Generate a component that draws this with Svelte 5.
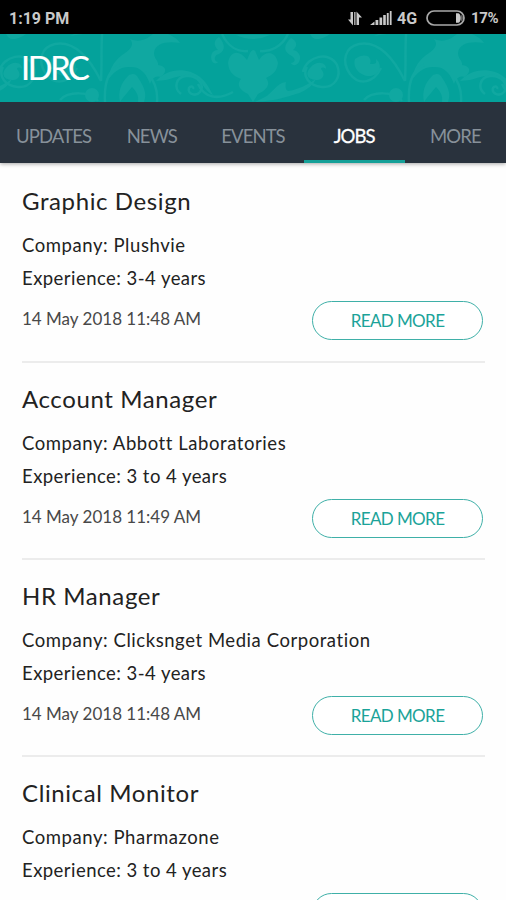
<script>
	let tabs = ['UPDATES', 'NEWS', 'EVENTS', 'JOBS', 'MORE'];
	let active = 'JOBS';

	let jobs = [
		{ title: 'Graphic Design', company: 'Plushvie', experience: '3-4 years', date: '14 May 2018 11:48 AM' },
		{ title: 'Account Manager', company: 'Abbott Laboratories', experience: '3 to 4 years', date: '14 May 2018 11:49 AM' },
		{ title: 'HR Manager', company: 'Clicksnget Media Corporation', experience: '3-4 years', date: '14 May 2018 11:48 AM' },
		{ title: 'Clinical Monitor', company: 'Pharmazone', experience: '3 to 4 years' }
	];
</script>

<svelte:head>
	<title>IDRC</title>
</svelte:head>

<div class="screen">
	<div class="status">
		<span class="clock">1:19 PM</span>
		<svg class="data" width="14" height="15" viewBox="0 0 14 15">
			<path d="M0 8.500h2.500V1h2.500v13.500zM6.200 1h1.300v13H6.200zM8.500 14V.5L14 6.500h-3V14z" />
		</svg>
		<svg class="signal" width="22" height="14" viewBox="0 0 22 14">
			<path d="M0 14l4.500-3.500V14zM5.500 9h2.800v5H5.500zM9.500 6.500h2.700V14H9.500zM13.200 4h2.600v10h-2.600zM16.800 2h1.900v12h-1.900zM19.800 0h1.800v14h-1.800z" />
		</svg>
		<span class="net">4G</span>
		<svg class="battery" width="39" height="16" viewBox="0 0 39 16">
			<rect x="1" y="1" width="37" height="14" rx="7" fill="none" stroke="#a9a9a9" stroke-width="1.700" />
			<path d="M30 3.200h2.500c3 1 3 8.600 0 9.600H30z" />
			<path d="M35.500 4.500q2 3.500 0 7z" />
		</svg>
		<span class="percent">17%</span>
	</div>

	<div class="header">
		<svg class="damask" width="506" height="68" viewBox="0 0 506 68">
			<defs>
				<g id="scroll">
					<path d="M108 46c2-14 8-21 17-27 7-5 9-9 5-14 10 4 17 0 23-5h15c4 2 9 4 12 9-13-2-25 0-26 10 0 6 5 8 4 12 8 1 10 6 3 12-6-2-9 2-11 7-4-12-11-18-21-17-10 0-16 6-21 13z" />
					<path d="M120 68c-2-10 0-18 9-27 5-2 6-1 8 1 5 8 11 16 7 26h-6c1-7-2-11-6-15-4 5-8 9-12 15z" />
					<path d="M105 68c-1-18 3-32 15-37M157 68c1-12-3-24-12-30" class="line" />
					<path d="M156 47c9-10 22-13 35-9 14 5 18 16 22 23-7-3-9-10-15-15-11-8-22-3-32 0z" />
					<path d="M181 60c-8-6-5-17 5-18 12-1 19 9 14 16-4 5-13 2-11-4 2-3 5-1 4 1" class="line" />
					<path d="M198 50c6 13 19 17 35 8" class="line" />
					<path d="M219 3c-5 3-6 8-1 13-7 0-8 7-6 11 1 3 5 3 6 1-5-1-4-7 1-8 7-4 6-10 0-17z" />
					<path d="M291 4c6 3 7 8 2 12 6 1 9 7 6 12-2 4-7 4-8 1 6-1 4-6-1-8-7-4-6-11 1-17z" />
					<path d="M222 0c6 13 16 18 26 17M288 0c-6 13-18 18-28 17" class="line" />
					<path d="M236 1q17 8 34 0zM228 29c2-12 11-14 19-3l3-7c2-4 5-4 6 0l3 7c7-11 17-8 19 3-1 9-6 12-12 15 5 6 1 12-8 16l-5 8-5-8c-8-4-12-9-7-15-8-3-12-7-13-16z" />
					<path d="M265 63c8-4 11-14 21-15-1 6 0 8 2 9 9-1 19-6 28-12-7 13-20 15-30 18-10 3-19 4-31 5z" />
					<path d="M303 38c4-17 27-21 34-7 5 12-3 23-15 22-13-1-20-11-15-20" class="line" />
					<path d="M310 34c7-9 17-5 16 1-2-2-5-2-5 0 5 5 2 11-4 11-8 0-13-5-7-12z" />
					<path d="M381 34c-7 14-21 19-31 6-9-13-5-27 9-30 16-3 31 7 46 37" class="line" />
					<path d="M355 25c9-7 18-3 15 5 8 0 6-2 6-5 7 6 4 15-5 17-10 1-19-8-16-17z" />
					<path d="M406 0c-1 20 0 30-1 47M364 66c8-9 31-9 38 1" class="line" />
					<circle cx="396" cy="61" r="7" />
					<path d="M374 2l4-2h9zM312 3c5 5 14 0 18-3h-20z" />
				</g>
			</defs>
			<use href="#scroll" />
			<use href="#scroll" x="304" />
			<use href="#scroll" x="-304" />
		</svg>
		<h1>IDRC</h1>
	</div>

	<div class="tabs">
		{#each tabs as tab}
			<div class="tab" class:active={tab === active}><span>{tab}</span></div>
		{/each}
	</div>

	<div class="list">
		{#each jobs as job}
			<div class="job">
				<h2>{job.title}</h2>
				<p class="company">Company: {job.company}</p>
				<p>Experience: {job.experience}</p>
				<div class="row">
					<span class="date">{job.date ?? ''}</span>
					<button class="btn" aria-label="Read more">{job.date ? 'READ MORE' : ''}</button>
				</div>
			</div>
		{/each}
	</div>
</div>

<style>
	:global(body) {
		background: #fefefe;
	}

	.screen {
		width: 506px;
		height: 900px;
		overflow: hidden;
		display: flex;
		flex-direction: column;
		font-family: Lato, "Open Sans", sans-serif;
		color: #222;
	}

	.status {
		flex: none;
		height: 34px;
		box-sizing: border-box;
		padding: 2px 8px 0 9px;
		display: flex;
		align-items: center;
		background: #000;
		color: #c9c9c9;
		fill: #c9c9c9;
		font: 700 16px Roboto, sans-serif;
	}

	.clock {
		flex: 1;
	}

	.signal {
		margin-left: 8px;
	}

	.net {
		margin-left: 5px;
		width: 21px;
	}

	.battery {
		margin: 0 6px 0 8px;
	}

	.percent {
		width: 27px;
		font-size: 15px;
		letter-spacing: -0.4px;
	}

	.header {
		flex: none;
		height: 68px;
		position: relative;
		background: #04a29b;
	}

	/* pattern lies under the title */
	.damask {
		position: absolute;
		left: 0;
		top: 0;
		fill: #10a8a1;
	}

	.damask .line {
		fill: none;
		stroke: #10a8a1;
		stroke-width: 2.5;
	}

	h1 {
		position: relative;
		margin: 0;
		padding-left: 21px;
		line-height: 68px;
		font-size: 32.500px;
		font-weight: 400;
		letter-spacing: -2.3px;
		color: #fff;
		-webkit-text-stroke: 0.2px #fff;
	}

	.tabs {
		flex: none;
		height: 61px;
		display: flex;
		background: #29323d;
		box-shadow: 0 1px 4px rgba(0, 0, 0, 0.35);
	}

	.tab {
		flex: 1 1 0;
		width: 0;
		display: flex;
		justify-content: center;
		line-height: 69px;
		font-size: 18.500px;
		letter-spacing: -0.9px;
		white-space: nowrap;
		color: #87919a;
	}

	.tab:first-child span {
		padding-left: 6px;
	}

	.tab.active {
		color: #fff;
		-webkit-text-stroke: 0.3px #fff;
		box-shadow: inset 0 -3px #15a098;
	}

	.list {
		padding-top: 2px;
	}

	.job {
		height: 197px;
		margin: 0 21px 0 22px;
		box-sizing: border-box;
		border-bottom: 2px solid #ececec;
		padding-top: 20px;
	}

	.job:first-child {
		height: 198px;
	}

	h2 {
		margin: 0 0 12px;
		line-height: 32px;
		font-size: 24px;
		font-weight: 400;
		letter-spacing: 0.6px;
	}

	p {
		margin: 0;
		line-height: 33px;
		font-size: 18.500px;
		letter-spacing: 0.45px;
		white-space: nowrap;
	}

	.company {
		letter-spacing: 0.56px;
	}

	.row {
		display: flex;
		justify-content: space-between;
		margin-top: 6px;
	}

	.date {
		line-height: 35px;
		font-size: 17px;
		color: #484848;
	}

	.btn {
		width: 171px;
		height: 39px;
		margin-right: 2px;
		padding: 0;
		border: 1.500px solid #3fb0a8;
		border-radius: 20px;
		background: #fff;
		color: #1ba399;
		font: 400 17px Lato, sans-serif;
		letter-spacing: -0.6px;
	}
</style>
